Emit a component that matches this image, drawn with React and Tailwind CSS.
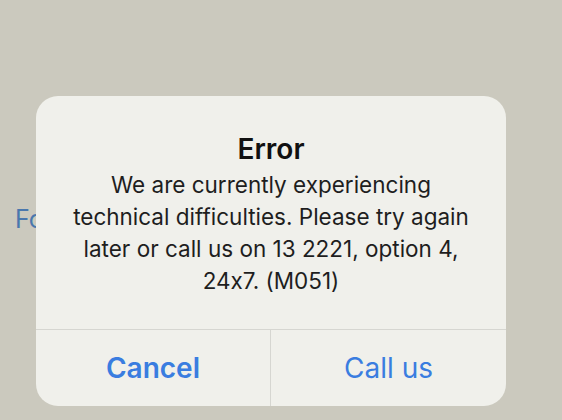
export default function App() {
  return (
    <div className="relative w-[562px] h-[420px] overflow-hidden bg-[#cbc9be] [font-variant-ligatures:no-contextual]" style={{ fontFamily: 'Inter, "Liberation Sans", sans-serif' }}>
      <div className="pt-[201px] pl-[15px] text-[25px] text-[#4a77ad]">Forgot password?</div>

      <div className="absolute left-[36px] top-[96px] w-[470px] h-[310px] rounded-[22px] bg-[#f0f0eb] flex flex-col overflow-hidden">
        <div className="h-[233px] pt-[36px] flex flex-col items-center text-center">
          <h1 className="text-[28px] leading-[34px] font-semibold text-[#111]">Error</h1>
          <p className="mt-[3px] px-4 text-[22.5px] leading-[32px] text-[#1e1e1e]">
            We are currently experiencing<br />
            technical difficulties. Please try again<br />
            later or call us on 13 2221, option 4,<br />
            24x7. (M051)
          </p>
        </div>
        <div className="flex flex-1 border-t border-[#d6d6d1]">
          <button className="w-[235px] flex items-center justify-center text-[28px] font-semibold text-[#3a7de0] border-r border-[#d6d6d1]">Cancel</button>
          <button className="flex-1 flex items-center justify-center text-[28px] text-[#3a7de0]">Call us</button>
        </div>
      </div>
    </div>
  );
}
